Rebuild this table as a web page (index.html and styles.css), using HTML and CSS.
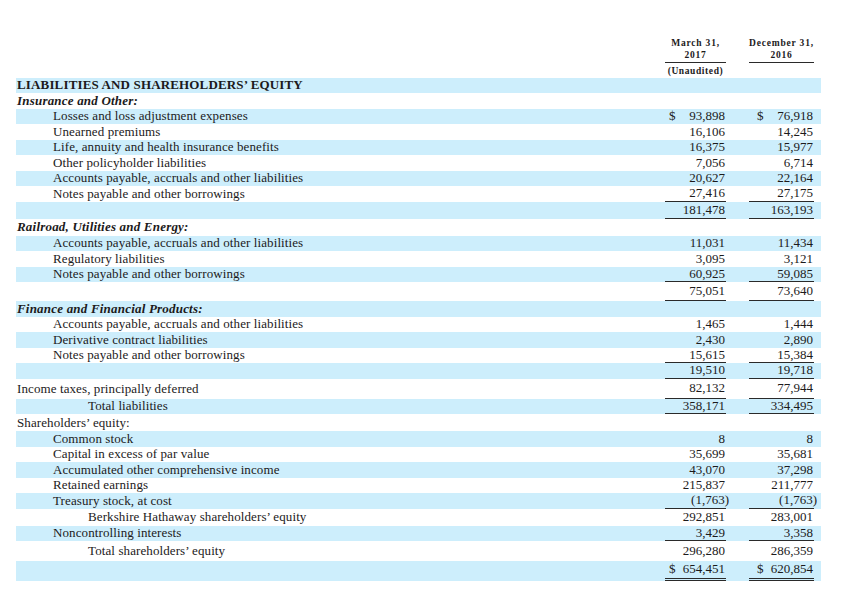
FILE: index.html
```html
<!DOCTYPE html>
<html lang="en">
<head>
<meta charset="utf-8">
<title>Liabilities and Shareholders' Equity</title>
<link rel="stylesheet" href="styles.css">
</head>
<body>
<table class="bs">
  <colgroup>
    <col class="c-label"><col class="c-n1"><col class="c-gap"><col class="c-n2"><col class="c-end">
  </colgroup>
  <thead>
    <tr class="head">
      <th></th>
      <th class="h"><div class="hd">March 31,<br>2017</div><div class="hu">(Unaudited)</div></th>
      <th></th>
      <th class="h"><div class="hd">December 31,<br>2016</div></th>
      <th></th>
    </tr>
  </thead>
  <tbody>
    <tr class="band"><td class="lbl cap">LIABILITIES AND SHAREHOLDERS’ EQUITY</td><td class="n"></td><td></td><td class="n"></td><td></td></tr>
    <tr><td class="lbl sec">Insurance and Other:</td><td class="n"></td><td></td><td class="n"></td><td></td></tr>
    <tr class="band"><td class="lbl i1">Losses and loss adjustment expenses</td><td class="n"><span class="cur">$</span>93,898</td><td></td><td class="n n2"><span class="cur">$</span>76,918</td><td></td></tr>
    <tr><td class="lbl i1">Unearned premiums</td><td class="n">16,106</td><td></td><td class="n n2">14,245</td><td></td></tr>
    <tr class="band"><td class="lbl i1">Life, annuity and health insurance benefits</td><td class="n">16,375</td><td></td><td class="n n2">15,977</td><td></td></tr>
    <tr><td class="lbl i1">Other policyholder liabilities</td><td class="n">7,056</td><td></td><td class="n n2">6,714</td><td></td></tr>
    <tr class="band"><td class="lbl i1">Accounts payable, accruals and other liabilities</td><td class="n">20,627</td><td></td><td class="n n2">22,164</td><td></td></tr>
    <tr><td class="lbl i1">Notes payable and other borrowings</td><td class="n u">27,416</td><td></td><td class="n n2 u">27,175</td><td></td></tr>
    <tr class="band t17"><td class="lbl"></td><td class="n u">181,478</td><td></td><td class="n n2 u">163,193</td><td></td></tr>
    <tr class="t17"><td class="lbl sec">Railroad, Utilities and Energy:</td><td class="n"></td><td></td><td class="n"></td><td></td></tr>
    <tr class="band"><td class="lbl i1">Accounts payable, accruals and other liabilities</td><td class="n">11,031</td><td></td><td class="n n2">11,434</td><td></td></tr>
    <tr><td class="lbl i1">Regulatory liabilities</td><td class="n">3,095</td><td></td><td class="n n2">3,121</td><td></td></tr>
    <tr class="band"><td class="lbl i1">Notes payable and other borrowings</td><td class="n u">60,925</td><td></td><td class="n n2 u">59,085</td><td></td></tr>
    <tr class="t19"><td class="lbl"></td><td class="n u">75,051</td><td></td><td class="n n2 u">73,640</td><td></td></tr>
    <tr class="band"><td class="lbl sec">Finance and Financial Products:</td><td class="n"></td><td></td><td class="n"></td><td></td></tr>
    <tr><td class="lbl i1">Accounts payable, accruals and other liabilities</td><td class="n">1,465</td><td></td><td class="n n2">1,444</td><td></td></tr>
    <tr class="band"><td class="lbl i1">Derivative contract liabilities</td><td class="n">2,430</td><td></td><td class="n n2">2,890</td><td></td></tr>
    <tr><td class="lbl i1">Notes payable and other borrowings</td><td class="n u">15,615</td><td></td><td class="n n2 u">15,384</td><td></td></tr>
    <tr class="band"><td class="lbl"></td><td class="n u">19,510</td><td></td><td class="n n2 u">19,718</td><td></td></tr>
    <tr class="t20"><td class="lbl">Income taxes, principally deferred</td><td class="n u">82,132</td><td></td><td class="n n2 u">77,944</td><td></td></tr>
    <tr class="band"><td class="lbl i2">Total liabilities</td><td class="n u">358,171</td><td></td><td class="n n2 u">334,495</td><td></td></tr>
    <tr class="t17"><td class="lbl">Shareholders’ equity:</td><td class="n"></td><td></td><td class="n"></td><td></td></tr>
    <tr class="band"><td class="lbl i1">Common stock</td><td class="n">8</td><td></td><td class="n n2">8</td><td></td></tr>
    <tr><td class="lbl i1">Capital in excess of par value</td><td class="n">35,699</td><td></td><td class="n n2">35,681</td><td></td></tr>
    <tr class="band"><td class="lbl i1">Accumulated other comprehensive income</td><td class="n">43,070</td><td></td><td class="n n2">37,298</td><td></td></tr>
    <tr><td class="lbl i1">Retained earnings</td><td class="n">215,837</td><td></td><td class="n n2">211,777</td><td></td></tr>
    <tr class="band"><td class="lbl i1">Treasury stock, at cost</td><td class="n u">(1,763<span class="cp">)</span></td><td></td><td class="n n2 u">(1,763<span class="cp">)</span></td><td></td></tr>
    <tr class="t17"><td class="lbl i2">Berkshire Hathaway shareholders’ equity</td><td class="n">292,851</td><td></td><td class="n n2">283,001</td><td></td></tr>
    <tr class="band"><td class="lbl i1">Noncontrolling interests</td><td class="n u">3,429</td><td></td><td class="n n2 u">3,358</td><td></td></tr>
    <tr class="t20"><td class="lbl i2">Total shareholders’ equity</td><td class="n">296,280</td><td></td><td class="n n2">286,359</td><td></td></tr>
    <tr class="band last"><td class="lbl"></td><td class="n uu"><span class="cur">$</span>654,451</td><td></td><td class="n n2 uu"><span class="cur">$</span>620,854</td><td></td></tr>
  </tbody>
</table>
</body>
</html>
```
FILE: styles.css
```css
html, body {
  margin: 0;
  padding: 0;
  background: #ffffff;
}

body {
  font-family: "Liberation Serif", "Times New Roman", serif;
  color: #1c1a1b;
}

.bs {
  margin-left: 16px;
  width: 805px;
  table-layout: fixed;
  border-collapse: separate;
  border-spacing: 0;
  font-size: 13px;
  line-height: 14px;
}

.c-label { width: 649px; }
.c-n1 { width: 61px; }
.c-gap { width: 23px; }
.c-n2 { width: 65px; }
.c-end { width: 7px; }

.head {
  height: 77px;
}

.head th {
  padding: 0;
  vertical-align: top;
}

.h {
  padding-top: 38px !important;
  font-size: 9.5px;
  font-weight: bold;
  letter-spacing: 0.8px;
  line-height: 11.5px;
  text-align: center;
  white-space: nowrap;
}

.hd {
  border-bottom: 1px solid #2a2a2a;
  padding-bottom: 1px;
}

.hu {
  margin-top: 3px;
  letter-spacing: 0.6px;
}

tbody tr {
  height: 15.5px;
}

tbody tr.t17 { height: 17px; }
tbody tr.t19 { height: 19px; }
tbody tr.t20 { height: 20px; }

tbody td {
  padding: 0;
  vertical-align: middle;
  white-space: nowrap;
}

tr.band td {
  background: #cdeefc;
}

tr.last td {
  height: 15.5px;
  vertical-align: top;
  padding-top: 1px;
}

.lbl {
  padding-left: 1px !important;
  letter-spacing: 0.1px;
}

.cap {
  font-weight: bold;
  letter-spacing: 0.15px;
}

.sec {
  font-weight: bold;
  font-style: italic;
  letter-spacing: 0.2px;
}

.i1 { padding-left: 37px !important; }
.i2 { padding-left: 72px !important; }

.n {
  text-align: right;
  padding-right: 1px !important;
  padding-left: 4px !important;
}

.n2 {
  padding-left: 8px !important;
}

.cur {
  float: left;
}

.cp {
  margin-right: -4px;
}

.u {
  border-bottom: 1px solid #2a2a2a;
}

.uu {
  border-bottom: 3px double #2a2a2a;
}
```
